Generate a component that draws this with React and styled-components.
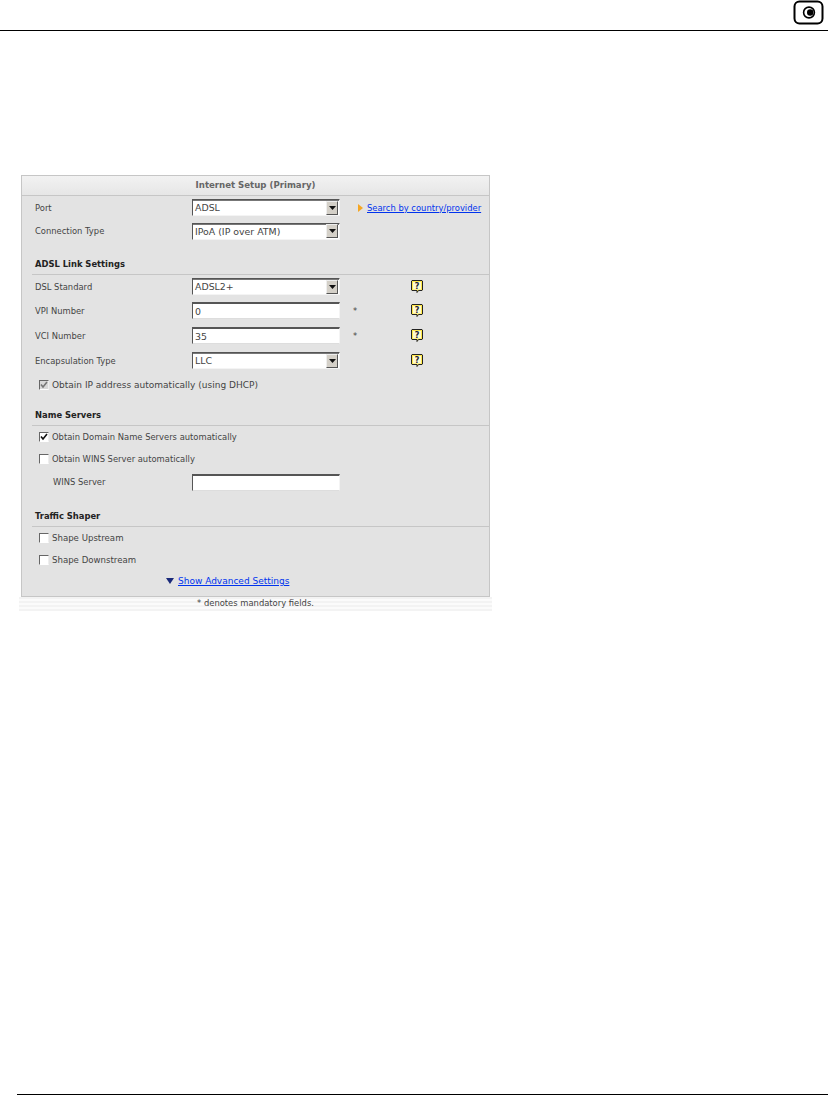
import React from 'react';
import styled, { createGlobalStyle } from 'styled-components';

const GlobalStyle = createGlobalStyle`
  html, body {
    margin: 0;
    padding: 0;
    background: #fff;
  }
  body {
    font-family: 'DejaVu Sans', Verdana, sans-serif;
    font-size: 8.4px;
    color: #444;
  }
`;

const Page = styled.div`
  width: 828px;
  height: 1095px;
  display: flex;
  flex-direction: column;
  overflow: hidden;
`;

const TopBar = styled.header`
  height: 30px;
  border-bottom: 1px solid #000;
  display: flex;
  justify-content: flex-end;
  align-items: flex-start;
  padding-right: 4px;
`;

const Content = styled.main`
  flex: 1;
  padding: 144px 0 0 19px;
`;

const BottomLine = styled.div`
  height: 1px;
  margin-left: 17px;
  background: #000;
`;

const Panel = styled.section`
  width: 467px;
  margin-left: 2px;
  background: #e3e3e3;
  border: 1px solid #c6c6c6;
`;

const PanelTitle = styled.div`
  height: 19px;
  line-height: 19px;
  text-align: center;
  font-size: 8.6px;
  font-weight: bold;
  color: #666;
  background: linear-gradient(#f2f2f2, #e6e6e6);
  border-bottom: 1px solid #c6c6c6;
`;

const Row = styled.div`
  display: grid;
  grid-template-columns: 157px 148px 13px 58px 12px;
  align-items: center;
  height: ${(p) => p.$h || 24}px;
  padding-left: 13px;
`;

const Label = styled.label`
  white-space: nowrap;
  padding-left: ${(p) => (p.$indent ? 18 : 0)}px;
`;

const SectionTitle = styled.h3`
  margin: ${(p) => p.$top}px 0 0 10px;
  height: 19px;
  line-height: 19px;
  padding-left: 3px;
  font-size: 8.4px;
  font-weight: bold;
  color: #222;
  border-bottom: 1px solid #c6c6c6;
`;

const SelectBox = styled.div`
  height: 17px;
  display: flex;
  align-items: center;
  justify-content: space-between;
  background: #fff;
  border-top: 1px solid #555;
  border-left: 1px solid #555;
  border-right: 1px solid #f4f4f4;
  border-bottom: 1px solid #f4f4f4;
  padding: 0 1px 0 2px;
  box-sizing: border-box;
  box-shadow: inset 0 1px 0 #777;
  font-size: 9.4px;
`;

const SelectButton = styled.span`
  width: 12px;
  height: 14px;
  background: #d4d0c8;
  border-right: 1px solid #555;
  border-bottom: 1px solid #555;
  border-top: 1px solid #eee;
  border-left: 1px solid #eee;
  display: flex;
  align-items: center;
  justify-content: center;
  box-sizing: border-box;
`;

const TextInput = styled.input`
  width: 148px;
  height: 17px;
  box-sizing: border-box;
  margin: 0;
  padding: 0 2px;
  background: #fff;
  border-top: 2px solid #555;
  border-left: 1px solid #555;
  border-right: 1px solid #f4f4f4;
  border-bottom: 1px solid #ddd;
  outline: none;
  font-family: inherit;
  font-size: 9.4px;
  color: #444;
`;

const Star = styled.span`
  grid-column: 3;
  padding-left: 13px;
`;

const HelpCell = styled.span`
  grid-column: 5;
  display: flex;
`;

const SearchCell = styled.span`
  grid-column: 3 / span 4;
  display: flex;
  align-items: center;
  gap: 4px;
  padding-left: 18px;
  white-space: nowrap;
`;

const BlueLink = styled.a`
  color: #0033ee;
  text-decoration: underline;
  font-size: ${(p) => p.$size || 8.4}px;
`;

const CheckRow = styled.div`
  display: flex;
  align-items: center;
  gap: 3px;
  height: ${(p) => p.$h || 22}px;
  padding-left: 17px;
  font-size: ${(p) => p.$size || 8.4}px;
`;

const CheckBox = styled.span`
  width: 8px;
  height: 8px;
  border-top: 1px solid #666;
  border-left: 1px solid #666;
  border-right: 1px solid #eee;
  border-bottom: 1px solid #fff;
  background: ${(p) => (p.$disabled ? '#d8d8d8' : '#fff')};
  display: flex;
  align-items: center;
  justify-content: center;
`;

const AdvancedRow = styled.div`
  height: 20px;
  padding: 0 0 5px 144px;
  display: flex;
  align-items: center;
  gap: 4px;
`;

const Legend = styled.div`
  width: 473px;
  height: 14px;
  line-height: 13px;
  text-align: center;
  background: repeating-linear-gradient(#f3f3f3 0 2px, #fbfbfb 2px 4px);
`;

const Check = ({ color = '#111' }) => (
  <svg width="8" height="8" viewBox="0 0 8 8">
    <path d="M1 3.5 L3 6 L7 1" fill="none" stroke={color} strokeWidth="1.6" />
  </svg>
);

const Arrow = () => (
  <svg width="7" height="4" viewBox="0 0 7 4">
    <path d="M0 0H7L3.5 4Z" fill="#111" />
  </svg>
);

const Help = () => (
  <svg width="12" height="13" viewBox="0 0 12 13">
    <path d="M1 .5H11L11.5 1V10L11 10.5H7.5L6 12.5V10.5H1L.5 10V1Z" fill="#ffe84a" stroke="#222" />
    <rect x="2" y="2" width="8" height="7.5" fill="#fffbd0" />
    <text x="6" y="8.7" textAnchor="middle" fontSize="8" fontWeight="bold" fontFamily="'DejaVu Sans', sans-serif" fill="#223">?</text>
  </svg>
);

const Select = ({ value }) => (
  <SelectBox>
    <span>{value}</span>
    <SelectButton><Arrow /></SelectButton>
  </SelectBox>
);

const App = () => (
  <>
    <GlobalStyle />
    <Page>
      <TopBar>
        <svg width="31" height="25" viewBox="0 0 31 25">
          <rect x="1.5" y="1.5" width="28" height="22" rx="5" fill="#fff" stroke="#000" strokeWidth="2" />
          <circle cx="16" cy="12.5" r="5.4" fill="#fff" stroke="#000" strokeWidth="1.6" />
          <circle cx="17.2" cy="12.5" r="3.2" fill="#000" />
        </svg>
      </TopBar>
      <Content>
        <Panel>
          <PanelTitle>Internet Setup (Primary)</PanelTitle>
          <Row $h={23}>
            <Label>Port</Label>
            <Select value="ADSL" />
            <SearchCell>
              <svg width="5" height="8" viewBox="0 0 5 8"><path d="M0 0L5 4L0 8Z" fill="#f5a623" /></svg>
              <BlueLink href="#">Search by country/provider</BlueLink>
            </SearchCell>
          </Row>
          <Row>
            <Label>Connection Type</Label>
            <Select value="IPoA (IP over ATM)" />
          </Row>

          <SectionTitle $top={12}>ADSL Link Settings</SectionTitle>
          <Row $h={23}>
            <Label>DSL Standard</Label>
            <Select value="ADSL2+" />
            <HelpCell><Help /></HelpCell>
          </Row>
          <Row $h={25}>
            <Label>VPI Number</Label>
            <TextInput defaultValue="0" />
            <Star>*</Star>
            <HelpCell><Help /></HelpCell>
          </Row>
          <Row $h={25}>
            <Label>VCI Number</Label>
            <TextInput defaultValue="35" />
            <Star>*</Star>
            <HelpCell><Help /></HelpCell>
          </Row>
          <Row $h={25}>
            <Label>Encapsulation Type</Label>
            <Select value="LLC" />
            <HelpCell><Help /></HelpCell>
          </Row>
          <CheckRow $h={23} $size={9}>
            <CheckBox $disabled><Check color="#777" /></CheckBox>
            Obtain IP address automatically (using DHCP)
          </CheckRow>

          <SectionTitle $top={10}>Name Servers</SectionTitle>
          <CheckRow>
            <CheckBox><Check /></CheckBox>
            Obtain Domain Name Servers automatically
          </CheckRow>
          <CheckRow>
            <CheckBox />
            Obtain WINS Server automatically
          </CheckRow>
          <Row>
            <Label $indent>WINS Server</Label>
            <TextInput />
          </Row>

          <SectionTitle $top={13}>Traffic Shaper</SectionTitle>
          <CheckRow $size={8.6}>
            <CheckBox />
            Shape Upstream
          </CheckRow>
          <CheckRow $size={8.6}>
            <CheckBox />
            Shape Downstream
          </CheckRow>
          <AdvancedRow>
            <svg width="8" height="6" viewBox="0 0 8 6"><path d="M0 0H8L4 6Z" fill="#1a2a7a" /></svg>
            <BlueLink href="#" $size={9}>Show Advanced Settings</BlueLink>
          </AdvancedRow>
        </Panel>
        <Legend>* denotes mandatory fields.</Legend>
      </Content>
      <BottomLine />
    </Page>
  </>
);

export default App;
